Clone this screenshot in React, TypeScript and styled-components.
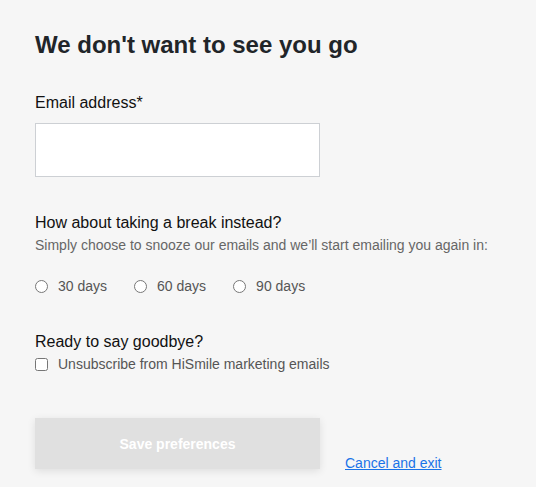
import styled, { createGlobalStyle } from "styled-components";

const GlobalStyle = createGlobalStyle`
  body {
    margin: 0;
    background: #f6f6f6;
    font-family: "Liberation Sans", Arial, sans-serif;
  }
`;

const Page = styled.div`
  padding: 29px 35px 20px;
  width: 536px;
  box-sizing: border-box;
`;

const Title = styled.h1`
  margin: 0;
  font-size: 24px;
  font-weight: 700;
  color: #212529;
  line-height: 32px;
`;

const Section = styled.div<{ $top: number }>`
  margin-top: ${(p) => p.$top}px;
`;

const Label = styled.label`
  display: block;
  font-size: 16px;
  color: #111;
  line-height: 20px;
`;

const EmailInput = styled.input`
  display: block;
  margin-top: 10px;
  width: 285px;
  height: 54px;
  box-sizing: border-box;
  border: 1px solid #cdd0d4;
  background: #fff;
  outline: none;
  font-size: 15px;
  padding: 0 12px;
`;

const Hint = styled.p`
  margin: 3px 0 0;
  font-size: 14px;
  color: #666;
  line-height: 18px;
`;

const Options = styled.div`
  display: flex;
  gap: 27px;
  margin-top: 24px;
`;

const Option = styled.label<{ $top?: number }>`
  display: flex;
  align-items: center;
  gap: 10px;
  margin-top: ${(p) => p.$top ?? 0}px;
  font-size: 14px;
  color: #555;
  cursor: pointer;

  input {
    margin: 0;
    width: 13px;
    height: 13px;
  }
`;

const Actions = styled.div`
  display: flex;
  align-items: flex-end;
  gap: 25px;
  margin-top: 46px;
`;

const SaveButton = styled.button`
  width: 285px;
  height: 51px;
  border: none;
  background: #e0e0e0;
  color: #fff;
  font-family: inherit;
  font-size: 14px;
  font-weight: 700;
  box-shadow: 0 2px 8px rgba(0, 0, 0, 0.1);
  cursor: not-allowed;
`;

const CancelLink = styled.a`
  font-size: 14px;
  color: #1a73e8;
  text-decoration: underline;
  margin-bottom: -3px;
  line-height: 18px;
`;

export default function App() {
  return (
    <Page>
      <GlobalStyle />
      <Title>We don't want to see you go</Title>

      <Section $top={32}>
        <Label htmlFor="email">Email address*</Label>
        <EmailInput id="email" type="email" />
      </Section>

      <Section $top={36}>
        <Label>How about taking a break instead?</Label>
        <Hint>Simply choose to snooze our emails and we’ll start emailing you again in:</Hint>
        <Options>
          {["30 days", "60 days", "90 days"].map((d) => (
            <Option key={d}>
              <input type="radio" name="snooze" />
              {d}
            </Option>
          ))}
        </Options>
      </Section>

      <Section $top={38}>
        <Label>Ready to say goodbye?</Label>
        <Option $top={4}>
          <input type="checkbox" />
          Unsubscribe from HiSmile marketing emails
        </Option>
      </Section>

      <Actions>
        <SaveButton disabled>Save preferences</SaveButton>
        <CancelLink href="#">Cancel and exit</CancelLink>
      </Actions>
    </Page>
  );
}
